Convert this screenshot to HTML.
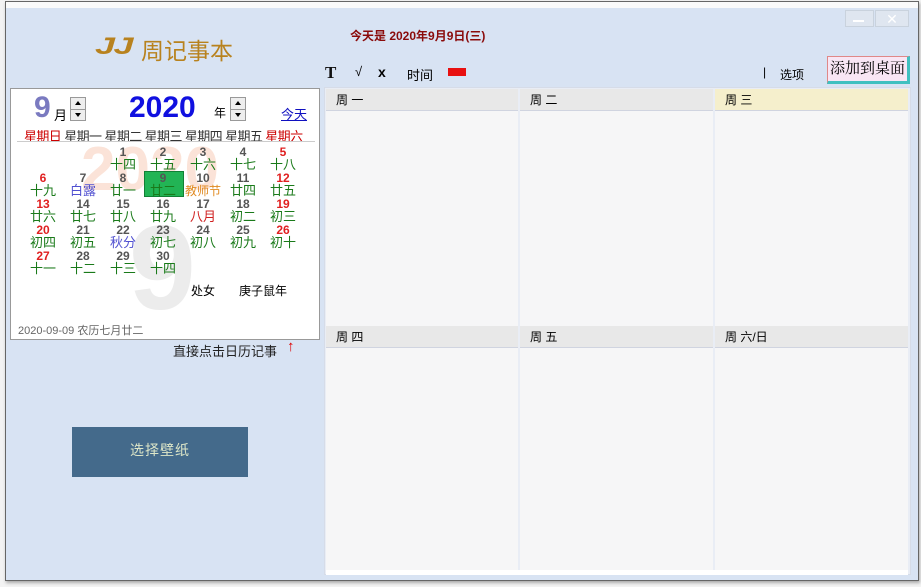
<!DOCTYPE html>
<html><head><meta charset="utf-8"><style>
*{margin:0;padding:0;box-sizing:border-box}
body{width:921px;height:587px;background:#f3f3f3;position:relative;overflow:hidden;font-family:"Liberation Sans","Noto Sans CJK SC",sans-serif;font-size:12px}
.a{position:absolute;white-space:nowrap}
#win{left:5px;top:1px;width:914px;height:580px;border:1px solid #666;background:#d8e3f3;box-shadow:1px 2px 3px #aaa}
#topw{left:6px;top:2px;width:912px;height:6px;background:#fafafa}
.cal{left:10px;top:88px;width:310px;height:252px;background:#fff;border:1px solid #999;overflow:hidden}
.n{position:absolute;width:40px;text-align:center;font-weight:bold;font-size:12px;color:#555;line-height:13px}
.l{position:absolute;width:40px;text-align:center;font-size:13px;color:#1a7a1a;line-height:14px}
.hd{position:absolute;height:22px;background:#e8e8e8;border-bottom:1px solid #d0d4e0;font-size:12px;line-height:22px;padding-left:10px}
.cell{position:absolute;background:#f6f6f7}
.spin{position:absolute;width:16px;height:24px;border:1px solid #999;background:#eee}
.spin:before{content:"";position:absolute;left:4px;top:3px;border:3px solid transparent;border-bottom:4px solid #000;border-top:0}
.spin:after{content:"";position:absolute;left:4px;top:15px;border:3px solid transparent;border-top:4px solid #000;border-bottom:0}
.spin i{position:absolute;left:0;top:11px;width:14px;height:1px;background:#999}
</style></head><body>
<div id="win" class="a"></div>
<div id="topw" class="a"></div>
<div class="a" style="left:95px;top:33px;font:italic bold 24px 'Liberation Sans',sans-serif;color:#b8821e;letter-spacing:-1px;transform:scaleX(1.5);transform-origin:left">JJ</div>
<div class="a" style="left:141px;top:32px;font-size:23px;color:#b8821e">周记事本</div>
<div class="a" style="left:350px;top:27px;font-size:12px;font-weight:bold;color:#8a0b0b">今天是 2020年9月9日(三)</div>
<div class="a" style="left:845px;top:10px;width:29px;height:17px;border:1px solid #c9d2dd;background:#dfe6f0"></div>
<div class="a" style="left:853px;top:20px;width:11px;height:2px;background:#fff"></div>
<div class="a" style="left:875px;top:10px;width:34px;height:17px;border:1px solid #c9d2dd;background:#dfe6f0;color:#fff;font-size:14px;text-align:center;line-height:16px">✕</div>
<div class="a" style="left:325px;top:63px;font:bold 17px 'Liberation Serif',serif;color:#111">T</div>
<div class="a" style="left:355px;top:64px;font-size:13px">√</div>
<div class="a" style="left:378px;top:64px;font-weight:bold;font-size:14px">x</div>
<div class="a" style="left:407px;top:65px;font-size:13px">时间</div>
<div class="a" style="left:448px;top:68px;width:18px;height:8px;background:#e81010"></div>
<div class="a" style="left:763px;top:65px;font-size:12px">|</div>
<div class="a" style="left:780px;top:66px;font-size:12px">选项</div>
<div class="a" style="left:827px;top:56px;width:83px;height:28px;background:#f8e6f4;border:1px solid #e08888;border-right:3px solid #40c0c0;border-bottom:3px solid #40c0c0;font:15px 'Liberation Serif','Noto Serif CJK SC',serif;line-height:25px;text-align:center">添加到桌面</div>

<div class="a cal">
 <div class="a" style="left:70px;top:45px;font:bold 62px 'Liberation Sans';color:#fbe3d8">2020</div>
 <div class="a" style="left:118px;top:110px;font:bold 120px 'Liberation Sans';color:#ececec">9</div>
 <div class="a" style="left:23px;top:2px;font:bold 30px 'Liberation Sans';color:#7a7ac0">9</div>
 <div class="a" style="left:43px;top:16px;font-size:13px">月</div>
 <div class="spin" style="left:59px;top:8px"><i></i></div>
 <div class="a" style="left:118px;top:2px;font:bold 30px 'Liberation Sans';color:#1010e0">2020</div>
 <div class="a" style="left:203px;top:15px;font-size:12px">年</div>
 <div class="spin" style="left:219px;top:8px"><i></i></div>
 <div class="a" style="left:270px;top:15px;font-size:13px;color:#1010c0;text-decoration:underline">今天</div>
 <div class="a" style="left:13px;top:37px;font-size:13px;color:#333;letter-spacing:-0.6px"><span style="color:#c00">星期日</span> 星期一 星期二 星期三 星期四 星期五 <span style="color:#c00">星期六</span></div>
 <div class="a" style="left:6px;top:52px;width:298px;height:1px;background:#ccc"></div>
 <div class="a" style="left:133px;top:82px;width:40px;height:26px;background:#22b455;border:1px solid #128035"></div>
 <div id="g"></div>
 <div class="a" style="left:180px;top:193px;font-size:12px">处女</div>
 <div class="a" style="left:228px;top:193px;font-size:12px">庚子鼠年</div>
 <div class="a" style="left:7px;top:233px;font-size:11px;color:#666">2020-09-09 农历七月廿二</div>
</div>
<div class="a" style="left:173px;top:341px;font-size:13px;color:#222">直接点击日历记事</div>
<div class="a" style="left:287px;top:338px;font-size:15px;font-weight:bold;color:#d00">↑</div>
<div class="a" style="left:72px;top:427px;width:176px;height:50px;background:#446a8b;color:#dde6c8;font-size:14px;text-align:center;line-height:46px;letter-spacing:1px">选择壁纸</div>

<div class="a" style="left:324px;top:87px;width:587px;height:488px;background:#e9edf5;border:1px solid #d6dce8"></div>
<div class="cell" style="left:326px;top:111px;width:192px;height:215px"></div>
<div class="cell" style="left:520px;top:111px;width:193px;height:215px"></div>
<div class="cell" style="left:715px;top:111px;width:193px;height:215px"></div>
<div class="cell" style="left:326px;top:348px;width:192px;height:222px"></div>
<div class="cell" style="left:520px;top:348px;width:193px;height:222px"></div>
<div class="cell" style="left:715px;top:348px;width:193px;height:222px"></div>
<div class="hd" style="left:326px;top:89px;width:192px">周 一</div>
<div class="hd" style="left:520px;top:89px;width:193px">周 二</div>
<div class="hd" style="left:715px;top:89px;width:193px;background:#f5efcc">周 三</div>
<div class="hd" style="left:326px;top:326px;width:192px">周 四</div>
<div class="hd" style="left:520px;top:326px;width:193px">周 五</div>
<div class="hd" style="left:715px;top:326px;width:193px">周 六/日</div>
<div class="a" style="left:326px;top:570px;width:582px;height:5px;background:#fff"></div>

<script>
var d=[[0,0,0],[0,0,0],[1,"十四"],[2,"十五"],[3,"十六"],[4,"十七"],[5,"十八"],
[6,"十九"],[7,"白露"],[8,"廿一"],[9,"廿二"],[10,"教师节"],[11,"廿四"],[12,"廿五"],
[13,"廿六"],[14,"廿七"],[15,"廿八"],[16,"廿九"],[17,"八月"],[18,"初二"],[19,"初三"],
[20,"初四"],[21,"初五"],[22,"秋分"],[23,"初七"],[24,"初八"],[25,"初九"],[26,"初十"],
[27,"十一"],[28,"十二"],[29,"十三"],[30,"十四"]];
var h="";
d.forEach(function(e,i){if(!e[0])return;var c=i%7,r=Math.floor(i/7);var x=12+c*40,y=57+r*26;
var red=(c==0||c==6);
var lc=e[1]=="白露"||e[1]=="秋分"?"#5050d0":e[1]=="教师节"?"#e08a20":e[1]=="八月"?"#d02020":"#1a7a1a";
h+='<div class="n" style="left:'+x+'px;top:'+y+'px;color:'+(red?'#e02020':'#555')+'">'+e[0]+'</div>';
h+='<div class="l" style="left:'+x+'px;top:'+(y+12)+'px;color:'+lc+(e[1]=="教师节"?';font-size:12px':'')+'">'+e[1]+'</div>';});
document.getElementById("g").innerHTML=h;
</script>
</body></html>
